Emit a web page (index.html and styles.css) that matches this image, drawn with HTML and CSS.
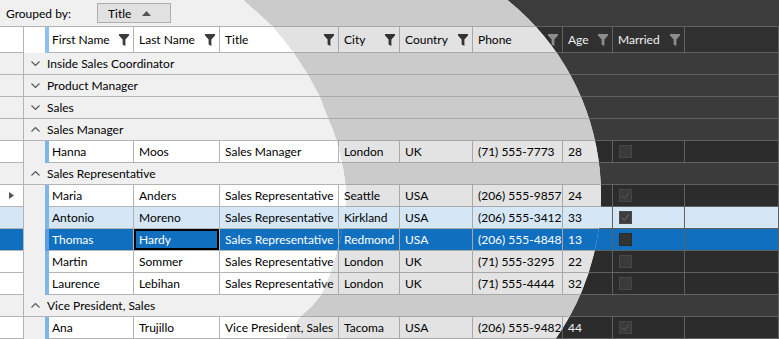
FILE: index.html
```html
<!DOCTYPE html>
<html lang="en">
<head>
    <meta charset="UTF-8">
    <title>Employees - Grouped Grid</title>
    <link rel="stylesheet" href="styles.css">
</head>
<body>
    <svg class="defs" aria-hidden="true">
        <symbol id="ico-filter" viewBox="0 0 10 12"><path d="M0 0H10V1.4L6.4 5.4V12L3.6 10.6V5.4L0 1.4Z"/></symbol>
        <symbol id="ico-down" viewBox="0 0 9 5"><polyline points="0.5,0.5 4.5,4.5 8.5,0.5"/></symbol>
        <symbol id="ico-up" viewBox="0 0 9 5"><polyline points="0.5,4.5 4.5,0.5 8.5,4.5"/></symbol>
        <symbol id="ico-check" viewBox="0 0 11 11"><polyline points="2,5.8 4.4,8.3 9,2.6"/></symbol>
    </svg>

    <div class="stage">
        <div class="layer theme-dark" id="base-layer">
            <div class="group-panel">
                <span class="group-label">Grouped by:</span>
                <span class="group-chip">Title
                    <svg class="sort-arrow" viewBox="0 0 9 5"><path d="M0 5L4.5 0L9 5Z"/></svg>
                </span>
            </div>

            <div class="row header">
                <div class="cell ind"></div>
                <div class="cell indent"></div>
                <div class="cell strip"></div>
                <div class="cell first">First Name<svg class="filter"><use href="#ico-filter"/></svg></div>
                <div class="cell">Last Name<svg class="filter"><use href="#ico-filter"/></svg></div>
                <div class="cell">Title<svg class="filter"><use href="#ico-filter"/></svg></div>
                <div class="cell">City<svg class="filter"><use href="#ico-filter"/></svg></div>
                <div class="cell">Country<svg class="filter"><use href="#ico-filter"/></svg></div>
                <div class="cell">Phone<svg class="filter"><use href="#ico-filter"/></svg></div>
                <div class="cell">Age<svg class="filter"><use href="#ico-filter"/></svg></div>
                <div class="cell">Married<svg class="filter"><use href="#ico-filter"/></svg></div>
                <div class="cell fill"></div>
            </div>

            <div class="row group">
                <div class="cell ind"></div>
                <div class="cell gcell"><svg class="chev"><use href="#ico-down"/></svg>Inside Sales Coordinator</div>
            </div>
            <div class="row group">
                <div class="cell ind"></div>
                <div class="cell gcell"><svg class="chev"><use href="#ico-down"/></svg>Product Manager</div>
            </div>
            <div class="row group">
                <div class="cell ind"></div>
                <div class="cell gcell"><svg class="chev"><use href="#ico-down"/></svg>Sales</div>
            </div>

            <div class="row group">
                <div class="cell ind"></div>
                <div class="cell gcell"><svg class="chev"><use href="#ico-up"/></svg>Sales Manager</div>
            </div>
            <div class="row data">
                <div class="cell ind"></div>
                <div class="cell indent"></div>
                <div class="cell strip"></div>
                <div class="cell first">Hanna</div>
                <div class="cell">Moos</div>
                <div class="cell">Sales Manager</div>
                <div class="cell">London</div>
                <div class="cell">UK</div>
                <div class="cell">(71) 555-7773</div>
                <div class="cell">28</div>
                <div class="cell"><span class="check"></span></div>
                <div class="cell fill"></div>
            </div>

            <div class="row group">
                <div class="cell ind"></div>
                <div class="cell gcell"><svg class="chev"><use href="#ico-up"/></svg>Sales Representative</div>
            </div>
            <div class="row data">
                <div class="cell ind"><svg class="pointer" viewBox="0 0 5 7"><path d="M0 0L5 3.5L0 7Z"/></svg></div>
                <div class="cell indent"></div>
                <div class="cell strip"></div>
                <div class="cell first">Maria</div>
                <div class="cell">Anders</div>
                <div class="cell">Sales Representative</div>
                <div class="cell">Seattle</div>
                <div class="cell">USA</div>
                <div class="cell">(206) 555-9857</div>
                <div class="cell">24</div>
                <div class="cell"><span class="check"><svg><use href="#ico-check"/></svg></span></div>
                <div class="cell fill"></div>
            </div>
            <div class="row data hover">
                <div class="cell ind"></div>
                <div class="cell indent"></div>
                <div class="cell strip"></div>
                <div class="cell first">Antonio</div>
                <div class="cell">Moreno</div>
                <div class="cell">Sales Representative</div>
                <div class="cell">Kirkland</div>
                <div class="cell">USA</div>
                <div class="cell">(206) 555-3412</div>
                <div class="cell">33</div>
                <div class="cell"><span class="check"><svg><use href="#ico-check"/></svg></span></div>
                <div class="cell fill"></div>
            </div>
            <div class="row data selected">
                <div class="cell ind"></div>
                <div class="cell indent"></div>
                <div class="cell strip"></div>
                <div class="cell first">Thomas</div>
                <div class="cell current">Hardy</div>
                <div class="cell">Sales Representative</div>
                <div class="cell">Redmond</div>
                <div class="cell">USA</div>
                <div class="cell">(206) 555-4848</div>
                <div class="cell">13</div>
                <div class="cell"><span class="check"></span></div>
                <div class="cell fill"></div>
            </div>
            <div class="row data">
                <div class="cell ind"></div>
                <div class="cell indent"></div>
                <div class="cell strip"></div>
                <div class="cell first">Martin</div>
                <div class="cell">Sommer</div>
                <div class="cell">Sales Representative</div>
                <div class="cell">London</div>
                <div class="cell">UK</div>
                <div class="cell">(71) 555-3295</div>
                <div class="cell">22</div>
                <div class="cell"><span class="check"></span></div>
                <div class="cell fill"></div>
            </div>
            <div class="row data">
                <div class="cell ind"></div>
                <div class="cell indent"></div>
                <div class="cell strip"></div>
                <div class="cell first">Laurence</div>
                <div class="cell">Lebihan</div>
                <div class="cell">Sales Representative</div>
                <div class="cell">London</div>
                <div class="cell">UK</div>
                <div class="cell">(71) 555-4444</div>
                <div class="cell">32</div>
                <div class="cell"><span class="check"></span></div>
                <div class="cell fill"></div>
            </div>

            <div class="row group">
                <div class="cell ind"></div>
                <div class="cell gcell"><svg class="chev"><use href="#ico-up"/></svg>Vice President, Sales</div>
            </div>
            <div class="row data">
                <div class="cell ind"></div>
                <div class="cell indent"></div>
                <div class="cell strip"></div>
                <div class="cell first">Ana</div>
                <div class="cell">Trujillo</div>
                <div class="cell">Vice President, Sales</div>
                <div class="cell">Tacoma</div>
                <div class="cell">USA</div>
                <div class="cell">(206) 555-9482</div>
                <div class="cell">44</div>
                <div class="cell"><span class="check"><svg><use href="#ico-check"/></svg></span></div>
                <div class="cell fill"></div>
            </div>
        </div>
    </div>

    <script>
        // same grid drawn in three themes, the lighter ones clipped on top
        var base = document.getElementById('base-layer');
        ['theme-mid', 'theme-light'].forEach(function(theme) {
            var layer = base.cloneNode(true);
            layer.removeAttribute('id');
            layer.setAttribute('aria-hidden', 'true');
            layer.className = 'layer ' + theme;
            base.parentNode.appendChild(layer);
        });
    </script>
</body>
</html>
```

FILE: styles.css
```css
body {
    margin: 0;
    font-family: "Segoe UI", Lato, sans-serif;
    font-size: 12px;
    overflow: hidden;
}
.defs {
    position: absolute;
    width: 0;
    height: 0;
}
.stage {
    position: relative;
    width: 779px;
    height: 339px;
    overflow: hidden;
}

/* themes */
.theme-dark {
    --panel: #3c3c3c;
    --head: #303030;
    --group: #3b3b3b;
    --cell: #2c2c2c;
    --indent: #3b3b3b;
    --line: #616161;
    --text: #f0f0f0;
    --icon: #8c8c8c;
    --box: #3a3a3a;
    --box-line: #474747;
    --tick: #5c5c5c;
}
.theme-mid {
    --panel: #cbcbcb;
    --head: #e2e2e2;
    --group: #cbcbcb;
    --cell: #e3e3e3;
    --indent: #cbcbcb;
    --line: #a8a8a8;
    --text: #000;
    --icon: #333;
    --box: #fff;
    --box-line: #8a8a8a;
    --tick: #333;
    clip-path: circle(250px at 351px 195px);
}
.theme-light {
    --panel: #f0f0f0;
    --head: #fff;
    --group: #f0f0f0;
    --cell: #fff;
    --indent: #f0f0f0;
    --line: #b4b4b4;
    --text: #000;
    --icon: #3c3c3c;
    --box: #fff;
    --box-line: #8a8a8a;
    --tick: #333;
    clip-path: polygon(243px 0, 258px 13px, 272px 26px, 283px 39px, 293px 52px, 301px 64px, 308px 75px, 314px 86px, 320px 97px, 324px 108px, 328px 118px, 333px 130px, 337px 142px, 340px 155px, 343px 168px, 345px 180px, 346px 195px, 345px 210px, 343px 225px, 340px 240px, 336px 255px, 332px 268px, 327px 282px, 321px 295px, 312px 306px, 300px 317px, 292px 328px, 285px 339px, 0 339px, 0 0);
}

.layer {
    position: absolute;
    top: 0;
    left: 0;
    width: 779px;
    height: 339px;
    background-color: var(--cell);
    color: var(--text);
}

/* grouping panel */
.group-panel {
    display: flex;
    align-items: center;
    height: 26px;
    padding-left: 6px;
    background-color: var(--panel);
    border-bottom: 1px solid var(--line);
}
.group-label {
    width: 91px;
}
.group-chip {
    display: flex;
    align-items: center;
    box-sizing: border-box;
    width: 74px;
    height: 20px;
    padding-left: 10px;
    background-color: #e1e1e1;
    border: 1px solid #adadad;
}
.sort-arrow {
    width: 9px;
    height: 5px;
    margin-left: 11px;
    fill: #555;
}

/* rows */
.row {
    display: grid;
    grid-template-columns: 24px 21px 4px 85px 86px 119px 61px 73px 90px 50px 72px 94px;
    height: 22px;
}
.cell {
    display: flex;
    align-items: center;
    box-sizing: border-box;
    padding: 0 5px;
    white-space: nowrap;
    overflow: hidden;
    background-color: var(--cell);
    border-right: 1px solid var(--line);
    border-bottom: 1px solid var(--line);
}
.cell.first {
    padding-left: 3px;
}
.cell.ind {
    justify-content: center;
    padding: 0;
}
.cell.indent {
    background-color: var(--indent);
    border: none;
}
.cell.strip {
    background-color: #80b5e8;
    border: none;
    padding: 0;
}

.header {
    height: 26px;
}
.header .cell {
    justify-content: space-between;
    padding-right: 4px;
    background-color: var(--head);
}
.header .cell.first {
    padding-left: 3px;
}
.header .cell.strip {
    background-color: #8fc0ee;
}
.filter {
    width: 10px;
    height: 12px;
    flex-shrink: 0;
    fill: var(--icon);
}

.group .cell {
    background-color: var(--group);
}
.gcell {
    grid-column: 2 / -1;
    padding-left: 7px;
}
.chev {
    width: 9px;
    height: 5px;
    margin-right: 7px;
    fill: none;
    stroke: #555;
    stroke-width: 1.1;
}

.pointer {
    width: 5px;
    height: 7px;
    fill: #555;
}

.check {
    display: flex;
    box-sizing: border-box;
    width: 13px;
    height: 13px;
    margin-left: 1px;
    background-color: var(--box);
    border: 1px solid var(--box-line);
}
.check svg {
    width: 11px;
    height: 11px;
    fill: none;
    stroke: var(--tick);
    stroke-width: 1;
}

/* row states */
.hover .cell {
    background-color: #d5e7f7;
    color: #000;
}
.selected .cell {
    background-color: #116fbf;
    color: #fff;
}
.hover .cell.indent,
.selected .cell.indent {
    background-color: var(--indent);
}
.hover .cell.strip {
    background-color: #80b5e8;
}
.selected .cell.strip {
    background-color: #5a9ee0;
}
.hover .check {
    background-color: #3e3e3e;
    border-color: #4a4a4a;
}
.hover .check svg {
    stroke: #707070;
}
.selected .check {
    background-color: #333;
    border-color: #2a2a2a;
}
.cell.current {
    box-shadow: inset 0 0 0 2px #000;
}
```
